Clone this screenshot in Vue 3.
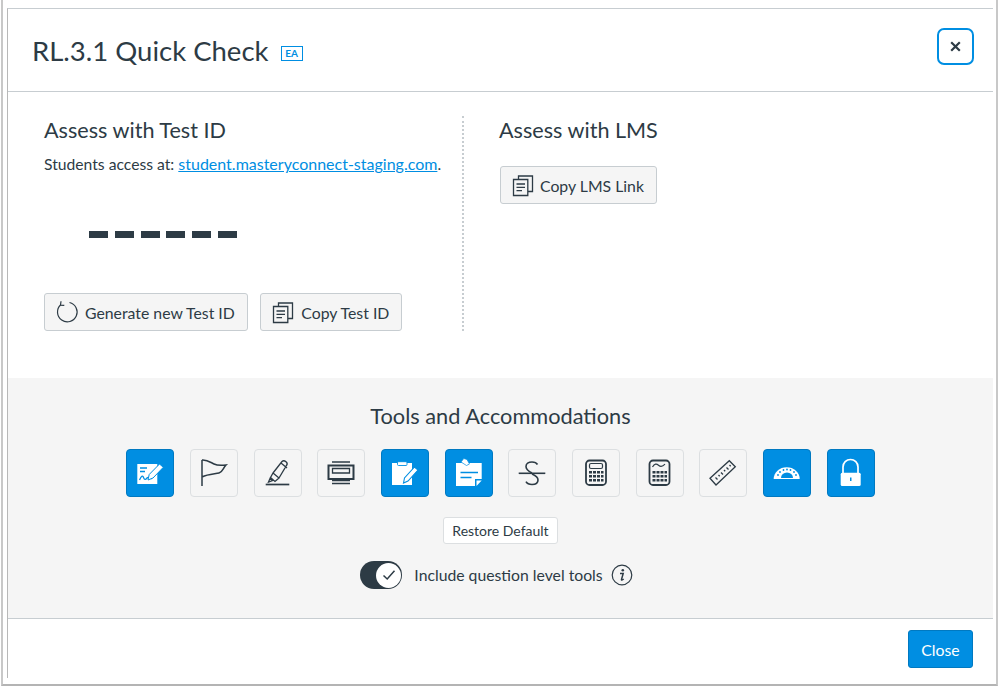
<script setup>
</script>

<template>
  <div class="page">
    <div class="frame">
      <div class="dialog">
        <header class="head">
          <h1 class="title">RL.3.1 Quick Check</h1>
          <span class="badge">EA</span>
          <button class="x" aria-label="Close">
            <svg width="11" height="11" viewBox="0 0 11 11"><path d="M1.2 1.2 9.8 9.8M9.8 1.2 1.2 9.8" stroke="#2d3b45" stroke-width="2.2" fill="none"/></svg>
          </button>
        </header>
        <section class="assess">
          <div class="left">
            <h2 class="h2">Assess with Test ID</h2>
            <p class="access">Students access at: <a class="link">student.masteryconnect-staging.com</a>.</p>
            <div class="dashes"><i></i><i></i><i></i><i></i><i></i><i></i></div>
            <div class="row">
              <button class="btn">
                <svg width="24" height="24" viewBox="0 0 24 24" fill="none" stroke="#2d3b45" stroke-width="1.2"><path d="M5.500 5A9.800 9.800 0 1 0 14.500 2.500"/><path d="M6 1.200 5.500 5.200l3.800 .2"/></svg>
                Generate new Test ID
              </button>
              <button class="btn">
                <svg width="24" height="24" viewBox="0 0 24 24" fill="none" stroke="#2d3b45" stroke-width="1.300"><path d="M2.500 6.500h14.300v16H2.500zM7.500 6.500V3h14v15.500h-4.700M5.500 11h8.500M5.500 14.300h8.500M5.500 17.600h5.500"/></svg>
                Copy Test ID
              </button>
            </div>
          </div>
          <div class="right">
            <h2 class="h2">Assess with LMS</h2>
            <button class="btn lms">
              <svg width="24" height="24" viewBox="0 0 24 24" fill="none" stroke="#2d3b45" stroke-width="1.300"><path d="M2.500 6.500h14.300v16H2.500zM7.500 6.500V3h14v15.500h-4.700M5.500 11h8.500M5.500 14.300h8.500M5.500 17.600h5.500"/></svg>
              Copy LMS Link
            </button>
          </div>
        </section>
        <section class="tools">
          <h2 class="h2 tools-title">Tools and Accommodations</h2>
          <div class="tool-row">
            <button class="tool on">
              <svg viewBox="0 0 48 48"><path d="M11.300 15h20v20h-20z" fill="#fff"/><path d="M14 19h7M14 22.500h5M13.500 31c2-4 3-5 4-2.500s2 2.500 3.500 .5 3 .500 5 .500" fill="none" stroke="#008ee2" stroke-width="1.300"/><path d="M22 31l1.200-5.500L33.500 15l3.800 3.300L27 29z" fill="#fff" stroke="#008ee2" stroke-width="1"/></svg>
            </button>
            <button class="tool">
              <svg viewBox="0 0 48 48" fill="none" stroke="#2d3b45" stroke-width="1.500"><path d="M12 11v26M12 11c5-.5 8 2 12 4s8 1.500 12 1c-3 3-3 7-7 8s-11 1-17 4"/></svg>
            </button>
            <button class="tool">
              <svg viewBox="0 0 48 48" fill="none" stroke="#2d3b45" stroke-width="1.300"><path d="M11.700 35.500h23.600" stroke-width="1.700"/><path d="M14.500 33l1.500-3.500 2.500 2zM16.500 28.500l2.500-4.500 6 5-4 3.500zM19 24l9-11.500c1-1 2.500-1 4 .3s1.500 2.500 .5 3.700l-7.500 12.500M27 14l6 5"/></svg>
            </button>
            <button class="tool">
              <svg viewBox="0 0 48 48" fill="none" stroke="#2d3b45"><path d="M15 13h18M15 31.700h18M15 34.500h18" stroke-width="1.300"/><path d="M11.500 16.500h25v13.500h-25z" stroke-width="2"/><path d="M15.500 19.500h17v4.500h-17z" stroke-width="1.300"/></svg>
            </button>
            <button class="tool on">
              <svg viewBox="0 0 48 48"><rect x="11" y="14" width="20" height="22" fill="#fff"/><rect x="16.500" y="12.700" width="9.500" height="3.800" rx="1" fill="#fff" stroke="#008ee2" stroke-width=".9"/><path d="M22.500 34l1-5L33.500 18l3.500 3-10 11z" fill="#fff" stroke="#008ee2" stroke-width="1.100"/></svg>
            </button>
            <button class="tool on">
              <svg viewBox="0 0 48 48"><path d="M11 14h25.700v16h-6.700v7h-19z" fill="#fff"/><path d="M16 13l2.800-3.500 3.200 1 2.500 4.500-3 1.500z" fill="#fff" stroke="#008ee2" stroke-width=".7"/><path d="M15.500 23.500h17.500M15.500 28.500h11" stroke="#008ee2" stroke-width="1.300"/><path d="M31.500 37v-5.500h5.200z" fill="#fff"/></svg>
            </button>
            <button class="tool">
              <svg viewBox="0 0 48 48" fill="none" stroke="#2d3b45" stroke-width="1.600"><path d="M10.700 24.300h26.600" /><path d="M29.500 15.500c-1-1.800-3-2.500-5.500-2.500-3.500 0-6 1.800-6 4.500 0 3 3 5 6 6.500M24 25c3.500 1.500 6 3 6 6 0 3-2.500 4.500-6 4.500-3 0-5-1-6-2.800"/></svg>
            </button>
            <button class="tool">
              <svg viewBox="0 0 48 48" fill="none" stroke="#2d3b45"><rect x="14" y="11.500" width="20" height="24.500" rx="3.500" stroke-width="1.800"/><rect x="17.500" y="14.500" width="13" height="5" rx="1.500" stroke-width="1.200"/><g fill="#2d3b45" stroke="none"><rect x="17" y="22" width="3" height="2.500"/><rect x="21" y="22" width="3" height="2.500"/><rect x="25" y="22" width="3" height="2.500"/><rect x="29" y="22" width="2.500" height="2.500"/><rect x="17" y="26" width="3" height="2.500"/><rect x="21" y="26" width="3" height="2.500"/><rect x="25" y="26" width="3" height="2.500"/><rect x="29" y="26" width="2.500" height="2.500"/><rect x="17" y="30" width="3" height="2.500"/><rect x="21" y="30" width="3" height="2.500"/><rect x="25" y="30" width="3" height="2.500"/><rect x="29" y="30" width="2.500" height="2.500"/></g></svg>
            </button>
            <button class="tool">
              <svg viewBox="0 0 48 48" fill="none" stroke="#2d3b45"><rect x="13.500" y="11.500" width="20" height="24.500" rx="3.500" stroke-width="1.800"/><path d="M16.500 18c2-3.500 4-3.500 6-1.800s4 1.500 6.500-1" stroke-width="1.200"/><g fill="#2d3b45" stroke="none"><rect x="16.500" y="22" width="3" height="2.500"/><rect x="20.500" y="22" width="3" height="2.500"/><rect x="24.500" y="22" width="3" height="2.500"/><rect x="28.500" y="22" width="2.500" height="2.500"/><rect x="16.500" y="26" width="3" height="2.500"/><rect x="20.500" y="26" width="3" height="2.500"/><rect x="24.500" y="26" width="3" height="2.500"/><rect x="28.500" y="26" width="2.500" height="2.500"/><rect x="16.500" y="30" width="3" height="2.500"/><rect x="20.500" y="30" width="3" height="2.500"/><rect x="24.500" y="30" width="3" height="2.500"/><rect x="28.500" y="30" width="2.500" height="2.500"/></g></svg>
            </button>
            <button class="tool">
              <svg viewBox="0 0 48 48" fill="none" stroke="#2d3b45" stroke-width="1.300"><path d="M11 29.300 30.300 11.700 36.300 17.700 17 36z"/><path d="M16.500 28.500l2 2M19.500 26l1.200 1.300M22 23.500l2 2M25 21l1.200 1.300M27.500 18.500l2 2M30.500 16l1.200 1.300"/></svg>
            </button>
            <button class="tool on">
              <svg viewBox="0 0 48 48"><path d="M10.700 30a13 11.700 0 0 1 26 0z" fill="#fff"/><path d="M18 29a6 5.500 0 0 1 12 0z" fill="#008ee2"/><g fill="#008ee2"><circle cx="15" cy="26" r=".9"/><circle cx="17" cy="23" r=".9"/><circle cx="20.500" cy="21" r=".9"/><circle cx="24" cy="20.500" r=".9"/><circle cx="27.500" cy="21" r=".9"/><circle cx="31" cy="23" r=".9"/><circle cx="33" cy="26" r=".9"/></g></svg>
            </button>
            <button class="tool on">
              <svg viewBox="0 0 48 48"><path d="M16 24v-6a7.500 7.500 0 0 1 15 0v6" fill="none" stroke="#fff" stroke-width="1.700"/><rect x="13.700" y="23.700" width="20" height="13.300" rx="1.500" fill="#fff"/><rect x="23" y="28.500" width="1.500" height="3.500" fill="#008ee2"/></svg>
            </button>
          </div>
          <button class="restore">Restore Default</button>
          <div class="toggle-row">
            <span class="toggle"><span class="knob">
              <svg width="14" height="12" viewBox="0 0 14 12" fill="none" stroke="#2d3b45" stroke-width="1.500"><path d="M1.500 6.500 5.200 10 12.500 1.800"/></svg>
            </span></span>
            <span class="toggle-label">Include question level tools</span>
            <span class="info"><svg width="22" height="22" viewBox="0 0 22 22"><circle cx="11" cy="11" r="9.800" fill="none" stroke="#2d3b45" stroke-width="1.200"/><circle cx="11.800" cy="6.300" r="1.300" fill="#2d3b45"/><path d="M9 9.500h3.200L10.500 15.500c-.2.800.6.800 2.200-.5" fill="none" stroke="#2d3b45" stroke-width="1.500"/></svg></span>
          </div>
        </section>
        <footer class="foot"><button class="close">Close</button></footer>
      </div>
    </div>
  </div>
</template>

<style>
html, body { margin: 0; background: #fff; overflow: hidden; }
</style>

<style scoped>
.page { width: 999px; height: 687px; padding: 0 1px 1px 1px; box-sizing: border-box; font-family: Lato, "Liberation Sans", sans-serif; color: #2d3b45; }
.frame { height: 686px; box-sizing: border-box; border-left: 2px solid #c8c8c8; border-right: 2px solid #c8c8c8; border-bottom: 2px solid #b4b4b4; padding: 8px 3px 6px 4px; }
.dialog { height: 100%; box-sizing: border-box; border-top: 1px solid #c7cdd1; border-left: 1px solid #b8b8b8; display: flex; flex-direction: column; background: #fff; }
button { font-family: inherit; color: inherit; cursor: pointer; }
.head { height: 83px; flex: none; box-sizing: border-box; border-bottom: 1px solid #c7cdd1; display: flex; align-items: center; padding: 0 19px 0 24px; }
.title { margin: 2px 0 0; font-size: 27.500px; font-weight: 400; line-height: 36px; }
.badge { margin-left: 12px; margin-top: 7px; width: 22px; height: 15px; box-sizing: border-box; border: 1.500px solid #008ee2; color: #008ee2; font-size: 10px; font-weight: 700; line-height: 12px; text-align: center; }
.x { margin-left: auto; width: 37px; height: 37px; padding: 0; box-sizing: border-box; border: 2px solid #008ee2; border-radius: 7px; background: #fff; display: flex; align-items: center; justify-content: center; margin-top: -8px; }
.assess { height: 286px; flex: none; box-sizing: border-box; padding: 24px 0 0 36px; display: flex; align-items: flex-start; }
.left { width: 420px; height: 215px; box-sizing: border-box; border-right: 2px dotted #c7cdd1; }
.right { padding-left: 35px; }
.h2 { margin: 0; font-size: 21.600px; font-weight: 400; line-height: 28px; }
.access { margin: 10px 0 0; font-size: 15.700px; line-height: 20px; }
.link { color: #008ee2; text-decoration: underline; font-size: 16px; }
.dashes { display: flex; gap: 6.800px; margin: 57px 0 0 45px; }
.dashes i { width: 19px; height: 7px; background: #2d3b45; }
.row { display: flex; gap: 12.500px; margin-top: 55px; }
.btn { height: 38px; box-sizing: border-box; display: flex; align-items: center; gap: 6px; padding: 0 12px 0 10px; background: #f5f5f5; border: 1px solid #c7cdd1; border-radius: 3px; font-size: 15.800px; white-space: nowrap; }
.btn svg { flex: none; }
.lms { margin-top: 22px; margin-left: 1px; gap: 5px; padding-right: 12px; }
.tools { height: 241px; flex: none; background: #f5f5f5; border-bottom: 1px solid #c7cdd1; display: flex; flex-direction: column; align-items: center; box-sizing: border-box; padding-top: 24px; }
.h2.tools-title { line-height: 28px; font-size: 21.750px; }
.tool-row { display: flex; gap: 15.700px; margin-top: 19px; }
.tool { width: 48px; height: 48px; padding: 0; box-sizing: border-box; background: #f5f5f5; border: 1px solid #dcdfe1; border-radius: 4px; display: block; }
.tool svg { display: block; width: 48px; height: 48px; margin: -1px; }
.tool.on { background: #008ee2; border-color: #0079c1; }
.restore { margin-top: 20px; width: 115px; height: 27px; padding: 0; box-sizing: border-box; background: #fff; border: 1px solid #dcdfe1; border-radius: 3px; font-size: 14px; }
.toggle-row { display: flex; align-items: center; margin-top: 17px; margin-right: 8px; }
.toggle { width: 42px; height: 28px; border-radius: 14px; background: #2d3b45; display: flex; align-items: center; justify-content: flex-end; padding-right: 1px; box-sizing: border-box; }
.knob { width: 25px; height: 25px; border-radius: 50%; background: #fff; display: flex; align-items: center; justify-content: center; }
.toggle-label { margin-left: 12px; font-size: 15.750px; line-height: 20px; }
.info { margin-left: 8px; display: flex; }
.foot { flex: 1; display: flex; justify-content: flex-end; align-items: flex-start; padding: 11px 20px 0 0; }
.close { width: 65px; height: 38px; padding: 0; background: #008ee2; border: 1px solid #0079c1; border-radius: 3px; color: #fff; font-size: 15.800px; }
</style>
